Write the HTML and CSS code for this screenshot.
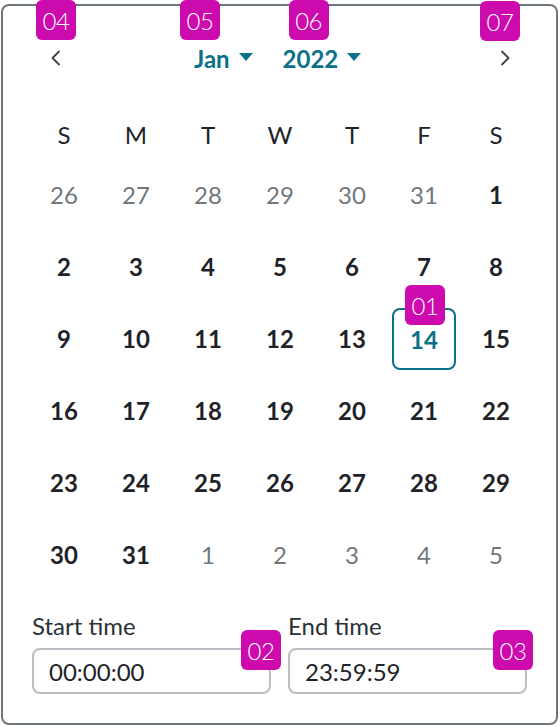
FILE: index.html
```html
<!DOCTYPE html>
<html lang="en">
<head>
<meta charset="utf-8">
<title>Date range picker</title>
<link rel="stylesheet" href="styles.css">
</head>
<body>
<div class="picker">
  <div class="picker-head">
    <button class="nav-btn nav-prev" aria-label="Previous month">
      <svg width="12" height="16" viewBox="0 0 12 16"><path d="M9 1.5 L2.5 8 L9 14.5" fill="none" stroke="#3a4147" stroke-width="1.8" stroke-linecap="round" stroke-linejoin="round"/></svg>
      <span class="tag tag-04">04</span>
    </button>
    <div class="period">
      <button class="period-select sel-month">Jan<span class="caret"></span><span class="tag tag-05">05</span></button>
      <button class="period-select sel-year">2022<span class="caret"></span><span class="tag tag-06">06</span></button>
    </div>
    <button class="nav-btn nav-next" aria-label="Next month">
      <svg width="12" height="16" viewBox="0 0 12 16"><path d="M3 1.5 L9.5 8 L3 14.5" fill="none" stroke="#3a4147" stroke-width="1.8" stroke-linecap="round" stroke-linejoin="round"/></svg>
      <span class="tag tag-07">07</span>
    </button>
  </div>

  <div class="weekdays">
    <span>S</span><span>M</span><span>T</span><span>W</span><span>T</span><span>F</span><span>S</span>
  </div>

  <div class="days">
    <span class="day muted">26</span><span class="day muted">27</span><span class="day muted">28</span><span class="day muted">29</span><span class="day muted">30</span><span class="day muted">31</span><span class="day">1</span>
    <span class="day">2</span><span class="day">3</span><span class="day">4</span><span class="day">5</span><span class="day">6</span><span class="day">7</span><span class="day">8</span>
    <span class="day">9</span><span class="day">10</span><span class="day">11</span><span class="day">12</span><span class="day">13</span><span class="day"><span class="selected">14<span class="tag tag-01">01</span></span></span><span class="day">15</span>
    <span class="day">16</span><span class="day">17</span><span class="day">18</span><span class="day">19</span><span class="day">20</span><span class="day">21</span><span class="day">22</span>
    <span class="day">23</span><span class="day">24</span><span class="day">25</span><span class="day">26</span><span class="day">27</span><span class="day">28</span><span class="day">29</span>
    <span class="day">30</span><span class="day">31</span><span class="day muted">1</span><span class="day muted">2</span><span class="day muted">3</span><span class="day muted">4</span><span class="day muted">5</span>
  </div>

  <div class="times">
    <label class="time-field">
      <span class="time-label">Start time</span>
      <span class="time-input">00:00:00<span class="tag tag-02">02</span></span>
    </label>
    <label class="time-field">
      <span class="time-label">End time</span>
      <span class="time-input">23:59:59<span class="tag tag-03">03</span></span>
    </label>
  </div>
</div>
</body>
</html>
```

FILE: styles.css
```css
* {
  box-sizing: border-box;
}

html, body {
  margin: 0;
  padding: 0;
  background: #ffffff;
}

body {
  font-family: Lato, "Open Sans", sans-serif;
  color: #1d2329;
}

.picker {
  position: relative;
  width: 557px;
  height: 721px;
  margin: 4px 0 0 1px;
  padding: 32px 24px 0 25px;
  border: 2px solid #6f777e;
  border-radius: 8px;
  background: #ffffff;
}

/* month / year navigation */
.picker-head {
  display: flex;
  align-items: center;
  height: 40px;
}

button {
  font: inherit;
  border: 0;
  background: none;
  padding: 0;
  cursor: pointer;
}

.nav-btn {
  position: relative;
  display: flex;
  align-items: center;
  justify-content: center;
  width: 24px;
  height: 40px;
}

.nav-prev {
  margin-left: 16px;
}

.nav-next {
  margin-left: auto;
  margin-right: 15px;
}

.period {
  display: flex;
  align-items: center;
  gap: 30px;
  margin-left: 126px;
}

.period-select {
  position: relative;
  display: flex;
  align-items: center;
  gap: 9px;
  height: 40px;
  font-size: 24px;
  font-weight: 700;
  color: #0b7189;
}

.caret {
  width: 0;
  height: 0;
  border-left: 7.5px solid transparent;
  border-right: 7.5px solid transparent;
  border-top: 8px solid #0b7189;
  margin-top: -2px;
}

/* calendar grid */
.weekdays,
.days {
  display: grid;
  grid-template-columns: repeat(7, 72px);
}

.weekdays {
  margin-top: 32px;
  height: 48px;
}

.weekdays span {
  display: flex;
  align-items: center;
  justify-content: center;
  font-size: 24px;
  color: #1d2329;
}

.day {
  display: flex;
  align-items: center;
  justify-content: center;
  height: 72px;
  font-size: 24px;
  font-weight: 700;
  color: #1d2329;
}

.day.muted {
  font-weight: 400;
  color: #6f777e;
}

.selected {
  position: relative;
  display: flex;
  align-items: center;
  justify-content: center;
  width: 64px;
  height: 62px;
  margin-top: 2px;
  border: 2px solid #0b7189;
  border-radius: 8px;
  color: #0b7189;
}

/* time inputs */
.times {
  display: grid;
  grid-template-columns: 239px 239px;
  column-gap: 17px;
  margin-top: 22px;
  padding-left: 4px;
}

.time-field {
  display: flex;
  flex-direction: column;
}

.time-label {
  font-size: 24px;
  line-height: 28px;
  color: #2a3137;
  margin-bottom: 8px;
}

.time-input {
  position: relative;
  display: flex;
  align-items: center;
  height: 46px;
  padding-left: 15px;
  border: 2px solid #b9bfc4;
  border-radius: 8px;
  font-size: 24px;
  color: #1d2329;
}

/* numbered callouts */
.tag {
  position: absolute;
  display: flex;
  align-items: center;
  justify-content: center;
  width: 40px;
  height: 40px;
  border-radius: 6px;
  background: #cc0aae;
  color: #ffffff;
  font-size: 24px;
  font-weight: 300;
  letter-spacing: -0.5px;
  z-index: 2;
}

.tag-04 { left: -8px; top: -38px; }
.tag-07 { left: -13px; top: -37px; }
.tag-05 { left: -14px; top: -38px; }
.tag-06 { left: 6px; top: -38px; }
.tag-01 { left: 11px; top: -25px; }
.tag-02 { left: 207px; top: -20px; }
.tag-03 { left: 203px; top: -20px; }
```
